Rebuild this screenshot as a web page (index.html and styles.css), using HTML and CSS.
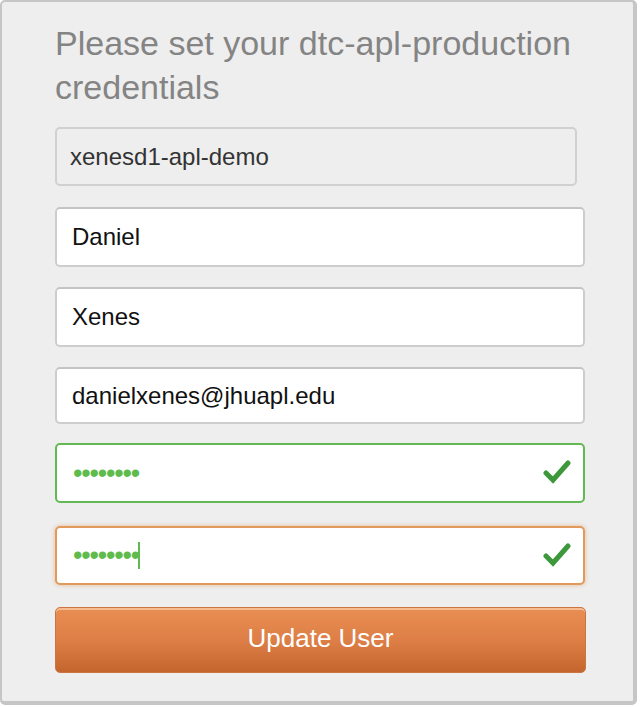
FILE: index.html
```html
<!DOCTYPE html>
<html lang="en">
<head>
<meta charset="utf-8">
<title>Set credentials</title>
<link rel="stylesheet" href="styles.css">
</head>
<body>
<div class="panel">
  <h1 class="title">Please set your dtc-apl-production credentials</h1>
  <form class="form">
    <div class="field field-disabled">xenesd1-apl-demo</div>
    <div class="field field-first">Daniel</div>
    <div class="field field-last">Xenes</div>
    <div class="field field-email">danielxenes@jhuapl.edu</div>
    <div class="field field-valid">
      <span class="dots">••••••••</span>
      <svg class="check" width="28" height="26" viewBox="0 0 28 26"><path d="M3 14 L10 21 L25 4" fill="none" stroke="#3d983b" stroke-width="5" stroke-linecap="round" stroke-linejoin="miter"/></svg>
    </div>
    <div class="field field-focus">
      <span class="dots">••••••••</span><span class="caret"></span>
      <svg class="check" width="28" height="26" viewBox="0 0 28 26"><path d="M3 14 L10 21 L25 4" fill="none" stroke="#3d983b" stroke-width="5" stroke-linecap="round" stroke-linejoin="miter"/></svg>
    </div>
    <button type="button" class="btn">Update User</button>
  </form>
</div>
</body>
</html>
```
FILE: styles.css
```css
html, body {
  margin: 0;
  padding: 0;
  background: #ffffff;
}
body {
  font-family: "Liberation Sans", Arial, sans-serif;
}
.panel {
  box-sizing: border-box;
  width: 637px;
  height: 705px;
  background: #eeeeee;
  border: 2px solid #c6c6c6;
  border-right-width: 4px;
  border-bottom-width: 4px;
  border-radius: 5px;
  padding: 19px 48px 0 53px;
}
.title {
  margin: 0;
  font-weight: normal;
  font-size: 34px;
  line-height: 44px;
  color: #848484;
  width: 530px;
}
.form {
  display: flex;
  flex-direction: column;
  margin-top: 18px;
}
.field {
  box-sizing: border-box;
  width: 530px;
  height: 60px;
  display: flex;
  align-items: center;
  padding: 0 15px;
  background: #ffffff;
  border: 2px solid #cdcdcd;
  border-top-color: #c4c4c4;
  border-radius: 5px;
  font-size: 24px;
  color: #111111;
  position: relative;
}
.field-disabled {
  width: 522px;
  height: 59px;
  background: #eeeeee;
  border-color: #d0d0d0;
  color: #333333;
  padding-left: 13px;
}
.field-first { margin-top: 21px; }
.field-last { margin-top: 20px; }
.field-email { margin-top: 20px; height: 57px; }
.field-valid {
  margin-top: 19px;
  border-color: #62b852;
}
.field-focus {
  margin-top: 23px;
  height: 59px;
  border-color: #e09a5c;
  box-shadow: 0 0 4px rgba(226, 140, 70, 0.55);
}
.dots {
  color: #5fbc4c;
  font-size: 27px;
  letter-spacing: -1.2px;
  margin-left: 1px;
}
.caret {
  display: inline-block;
  width: 2px;
  height: 27px;
  background: #5fbc4c;
  margin-left: -1px;
}
.check {
  position: absolute;
  right: 12px;
  top: 14px;
  filter: blur(0.7px);
}
.btn {
  box-sizing: border-box;
  margin-top: 22px;
  width: 531px;
  height: 66px;
  border: 1px solid #cc7440;
  border-radius: 5px;
  background: linear-gradient(#e98f53, #dd7f46 50%, #c4652d);
  box-shadow: inset 0 2px 0 rgba(255, 225, 200, 0.55);
  color: #ffffff;
  font-family: "Liberation Sans", Arial, sans-serif;
  font-size: 26px;
  padding: 0 0 4px;
  cursor: pointer;
}
```
